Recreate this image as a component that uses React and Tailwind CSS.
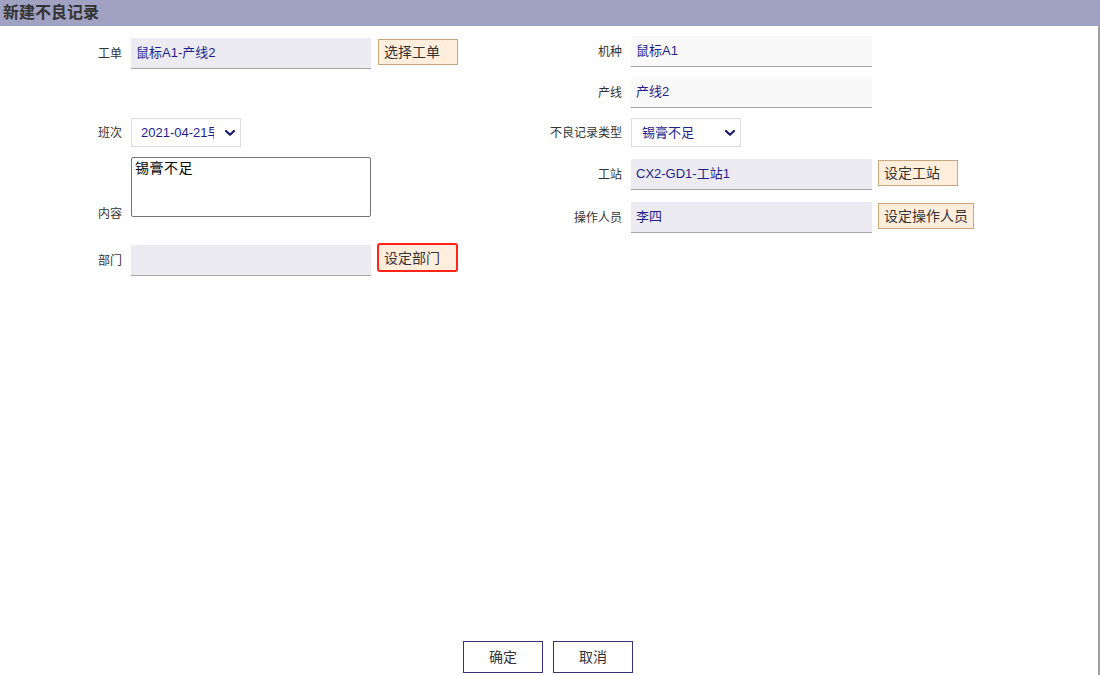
import React from "react";

function Field({ value, light, wide }) {
  return (
    <div
      className={`${wide ? "w-[241px]" : "w-[240px]"} h-[31px] flex items-center pl-[5px] text-[13px] text-[#1e1e8c] border-b border-[#a6a6a6] ${
        light ? "bg-[#f9f9f9]" : "bg-[#ecebf2]"
      }`}
    >
      {value}
    </div>
  );
}

function Btn({ children }) {
  return (
    <button className="mt-[1px] h-[26px] min-w-[80px] text-left px-[5px] bg-[#ffeedc] border border-[#c9a67c] text-[14px] text-[#333] leading-none">
      {children}
    </button>
  );
}

function Chevron() {
  return (
    <svg width="10" height="6" viewBox="0 0 10 6" className="shrink-0">
      <polyline points="1,1 5,4.8 9,1" fill="none" stroke="#1a1a6e" strokeWidth="2.2" strokeLinecap="round" strokeLinejoin="round" />
    </svg>
  );
}

function Select({ children, textW }) {
  return (
    <div className="w-[110px] h-[29px] border border-[#dcdcdc] bg-white flex items-center pl-[9px] pr-[5px] text-[13px] text-[#1e1e8c]">
      <span className={`${textW} overflow-hidden whitespace-nowrap`}>{children}</span>
      <span className="flex-1" />
      <Chevron />
    </div>
  );
}

function Label({ children, align = "items-center" }) {
  return (
    <div className={`w-[131px] pr-[9px] flex ${align} justify-end text-[12px] text-[#333] shrink-0`}>
      {children}
    </div>
  );
}

export default function App() {
  return (
    <div className="w-[1100px] h-[675px] flex flex-col bg-white font-['Liberation_Sans','Noto_Sans_CJK_SC',sans-serif] overflow-hidden">
      <div className="h-[26px] bg-[#a1a1c1] flex items-center pl-[3px] text-[16px] font-bold text-[#333]">
        新建不良记录
      </div>
      <div className="flex-1 flex flex-col border-r-2 border-[#a0a0a0]">
        <div className="flex-1 flex">
          {/* left column */}
          <div className="w-[500px] flex flex-col">
            <div className="mt-[12px] flex h-[31px]">
              <Label>工单</Label>
              <Field value="鼠标A1-产线2" />
              <div className="ml-[7px] flex items-start">
                <Btn>选择工单</Btn>
              </div>
            </div>
            <div className="mt-[49px] flex h-[29px]">
              <Label>班次</Label>
              <Select textW="w-[73px]">2021-04-21早班</Select>
            </div>
            <div className="mt-[10px] flex h-[60px]">
              <Label align="items-end leading-none pb-[0px] mb-[-3px]">内容</Label>
              <textarea
                readOnly
                defaultValue="锡膏不足"
                className="w-[240px] h-[60px] border border-[#767676] rounded-[2px] px-[3px] py-0 text-[14px] text-black resize-none outline-none font-['Noto_Sans_CJK_SC',sans-serif] leading-[18px] tracking-[0.5px]"
              />
            </div>
            <div className="mt-[28px] flex h-[31px]">
              <Label>部门</Label>
              <Field value="" />
              <div className="ml-[6px] flex items-start">
                <button className="mt-[-2px] h-[29px] w-[81px] text-left pl-[5px] bg-[#ffeedc] border-2 border-[#ff2318] rounded-[3px] text-[14px] text-[#333] leading-none">
                  设定部门
                </button>
              </div>
            </div>
          </div>
          {/* right column */}
          <div className="w-[500px] flex flex-col">
            <div className="mt-[10px] flex h-[31px]">
              <Label>机种</Label>
              <Field value="鼠标A1" light wide />
            </div>
            <div className="mt-[10px] flex h-[31px]">
              <Label>产线</Label>
              <Field value="产线2" light wide />
            </div>
            <div className="mt-[10px] flex h-[29px]">
              <Label>不良记录类型</Label>
              <Select textW="w-auto pl-[1px]">锡膏不足</Select>
            </div>
            <div className="mt-[12px] flex h-[31px]">
              <Label>工站</Label>
              <Field value="CX2-GD1-工站1" wide />
              <div className="ml-[6px] flex items-start">
                <Btn>设定工站</Btn>
              </div>
            </div>
            <div className="mt-[12px] flex h-[31px]">
              <Label>操作人员</Label>
              <Field value="李四" wide />
              <div className="ml-[6px] flex items-start">
                <Btn>设定操作人员</Btn>
              </div>
            </div>
          </div>
        </div>
        <div className="flex justify-center gap-[10px] pb-[2px] pr-[2px]">
          <button className="w-[80px] h-[32px] border border-[#333377] bg-white text-[14px] text-[#333]">确定</button>
          <button className="w-[80px] h-[32px] border border-[#333377] bg-white text-[14px] text-[#333]">取消</button>
        </div>
      </div>
    </div>
  );
}
